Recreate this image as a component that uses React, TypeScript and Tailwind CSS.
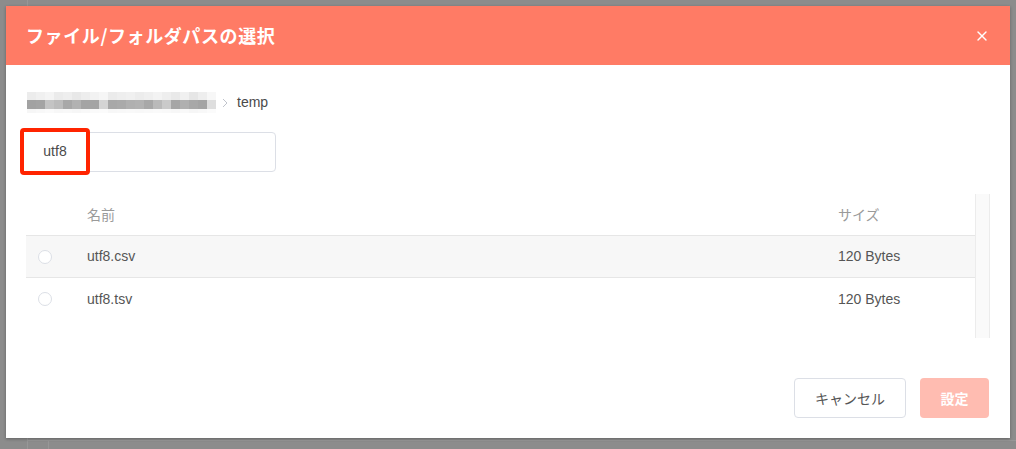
import { X } from "lucide-react";

const blurTop = ["#ececec", "#f0f0f0", "#f4f4f4", "#ebebeb", "#eeeeee", "#e8e8e8", "#ededed", "#f2f2f2", "#f6f6f6", "#ebebeb", "#eeeeee", "#f0f0f0", "#ececec", "#efefef", "#f3f3f3", "#eeeeee", "#e9e9e9", "#f0f0f0", "#e6e6e6", "#eeeeee", "#f7f7f7"];
const blurMid = ["#a2a2a2", "#a4a4a4", "#c4c4c4", "#bcbcbc", "#a8a8a8", "#b2b2b2", "#a4a4a4", "#a4a4a4", "#d4d4d4", "#a8a8a8", "#aaaaaa", "#b0b0b0", "#b2b2b2", "#a8a8a8", "#bababa", "#cacaca", "#a6a6a6", "#b0b0b0", "#a8a8a8", "#a4a4a4", "#dedede"];
const blurBot = ["#f6f6f6", "#f8f8f8", "#fafafa", "#f7f7f7", "#f8f8f8", "#f6f6f6", "#f8f8f8", "#fafafa", "#fbfbfb", "#f7f7f7", "#f8f8f8", "#f9f9f9", "#f8f8f8", "#f9f9f9", "#fafafa", "#f9f9f9", "#f7f7f7", "#f9f9f9", "#f6f6f6", "#f8f8f8", "#fbfbfb"];

const files = [
  { name: "utf8.csv", size: "120 Bytes", hover: true },
  { name: "utf8.tsv", size: "120 Bytes", hover: false },
];

const BlurredPath = () => (
  <div className="flex flex-col">
    {[blurTop, blurMid, blurBot].map((row, r) => (
      <div key={r} className={`flex ${r === 0 ? "h-[8px]" : r === 1 ? "h-[9px]" : "h-[4px]"}`}>
        {row.map((c, i) => (
          <div key={i} className="w-[9px] h-full" style={{ backgroundColor: c }} />
        ))}
      </div>
    ))}
  </div>
);

export default function App() {
  return (
    <div
      className="relative w-[1016px] h-[449px] bg-[#8c8c8c] overflow-hidden text-[#606266]"
      style={{ fontFamily: '"Liberation Sans", "Noto Sans CJK JP", sans-serif' }}
    >
      {/* page underneath the overlay */}
      <div className="flex h-full">
        <div className="w-[28px] border-r border-[#979797]" />
        <div className="flex-1 flex flex-col justify-end">
          <div className="h-[9px] border-t border-[#979797] flex">
            <div className="w-[21px] border-r border-[#979797]" />
          </div>
        </div>
      </div>

      {/* dialog */}
      <div className="absolute top-[6px] left-[6px] w-[1004px] h-[432px] bg-white flex flex-col shadow-[0_1px_3px_rgba(0,0,0,0.3)]">
        <div className="h-[59px] bg-[#ff7b65] flex items-center justify-between pl-[20px] pr-[20px]">
          <h1 className="text-white font-bold text-[18px] tracking-[0.6px]" style={{ fontFamily: '"Noto Sans CJK JP", sans-serif' }}>
            ファイル/フォルダパスの選択
          </h1>
          <X className="w-[16px] h-[16px] text-white" strokeWidth={2} />
        </div>

        <div className="flex-1 flex flex-col pl-[20px] pr-[20px]">
          <div className="flex items-center mt-[27px] h-[21px] pl-[1px]">
            <BlurredPath />
            <svg className="ml-[5px] w-[8px] h-[10px]" viewBox="0 0 8 10" fill="none">
              <path d="M2 1l4 4-4 4" stroke="#c0c4cc" strokeWidth="1" />
            </svg>
            <span className="ml-[8px] text-[14px] text-[#4a4a4a]">temp</span>
          </div>

          <div className="relative mt-[19px] h-[40px] w-[250px]">
            <div className="h-full w-full border border-[#dcdfe6] rounded-[4px]" />
            <div className="absolute top-[-4px] left-[-6px] w-[70px] h-[47px] border-[4px] border-[#ff2400] rounded-[4px] bg-white flex items-center justify-center text-[14px] text-[#4a4a4a]">
              utf8
            </div>
          </div>

          <div className="mt-[22px] flex h-[144px]">
            <div className="flex-1 flex flex-col text-[14px]">
              <div className="h-[42px] flex items-center border-b border-[#e6e6e6] text-[#9a9a9a]">
                <div className="w-[61px]" />
                <div className="flex-1" style={{ fontFamily: '"Noto Sans CJK JP", sans-serif' }}>名前</div>
                <div className="w-[137px]" style={{ fontFamily: '"Noto Sans CJK JP", sans-serif' }}>サイズ</div>
              </div>
              {files.map((f, i) => (
                <div
                  key={f.name}
                  className={`h-[42px] flex items-center text-[#555555] ${i === 0 ? "border-b border-[#e6e6e6]" : ""} ${f.hover ? "bg-[#f7f7f7]" : "bg-white"}`}
                >
                  <div className="w-[61px] flex pl-[12px]">
                    <span className="w-[14px] h-[14px] rounded-full border border-[#dcdfe6] bg-white" />
                  </div>
                  <div className="flex-1">{f.name}</div>
                  <div className="w-[137px]">{f.size}</div>
                </div>
              ))}
            </div>
            <div className="w-[15px] bg-[#fafafa] border-l border-r border-[#ececec]" />
          </div>

          <div className="mt-auto mb-[20px] flex justify-end gap-[14px] pr-[1px]" style={{ fontFamily: '"Noto Sans CJK JP", sans-serif' }}>
            <button className="w-[112px] h-[40px] border border-[#dcdfe6] rounded-[4px] bg-white text-[14px] text-[#555555]">
              キャンセル
            </button>
            <button className="w-[69px] h-[40px] rounded-[4px] bg-[#ffbcb1] text-[14px] text-white font-bold">
              設定
            </button>
          </div>
        </div>
      </div>
    </div>
  );
}
